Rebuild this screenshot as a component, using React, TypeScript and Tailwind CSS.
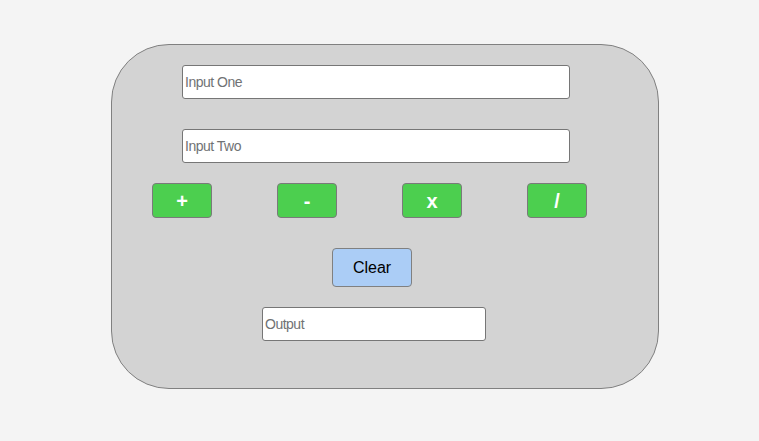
export default function App() {
  const ops = ['+', '-', 'x', '/']
  return (
    <div className="w-[759px] h-[441px] bg-[#f4f4f4] pt-[44px] pl-[111px] font-['Liberation_Sans',Arial,sans-serif]">
      <div className="w-[548px] h-[345px] rounded-[58px] border border-[#808080] bg-[#d3d3d3] flex flex-col">
        <input
          placeholder="Input One"
          className="ml-[70px] mt-[20px] w-[388px] h-[34px] bg-white border border-[#767676] rounded-[3px] px-[2px] text-[14px] tracking-[-0.5px] placeholder:text-[#707274] outline-none"
        />
        <input
          placeholder="Input Two"
          className="ml-[70px] mt-[30px] w-[388px] h-[34px] bg-white border border-[#767676] rounded-[3px] px-[2px] text-[14px] tracking-[-0.5px] placeholder:text-[#707274] outline-none"
        />
        <div className="ml-[40px] mt-[20px] flex gap-[65px]">
          {ops.map((op) => (
            <button
              key={op}
              className="w-[60px] h-[35px] bg-[#4ccf4f] border border-[#7a7a7a] rounded-[4px] text-white text-[20px] font-bold leading-none"
            >
              {op}
            </button>
          ))}
        </div>
        <button className="ml-[220px] mt-[30px] w-[80px] h-[39px] bg-[#abcdf6] border border-[#808080] rounded-[4px] text-black text-[16px]">
          Clear
        </button>
        <input
          placeholder="Output"
          className="ml-[150px] mt-[20px] w-[224px] h-[34px] bg-white border border-[#767676] rounded-[3px] px-[2px] text-[14px] tracking-[-0.5px] placeholder:text-[#707274] outline-none"
        />
      </div>
    </div>
  )
}
